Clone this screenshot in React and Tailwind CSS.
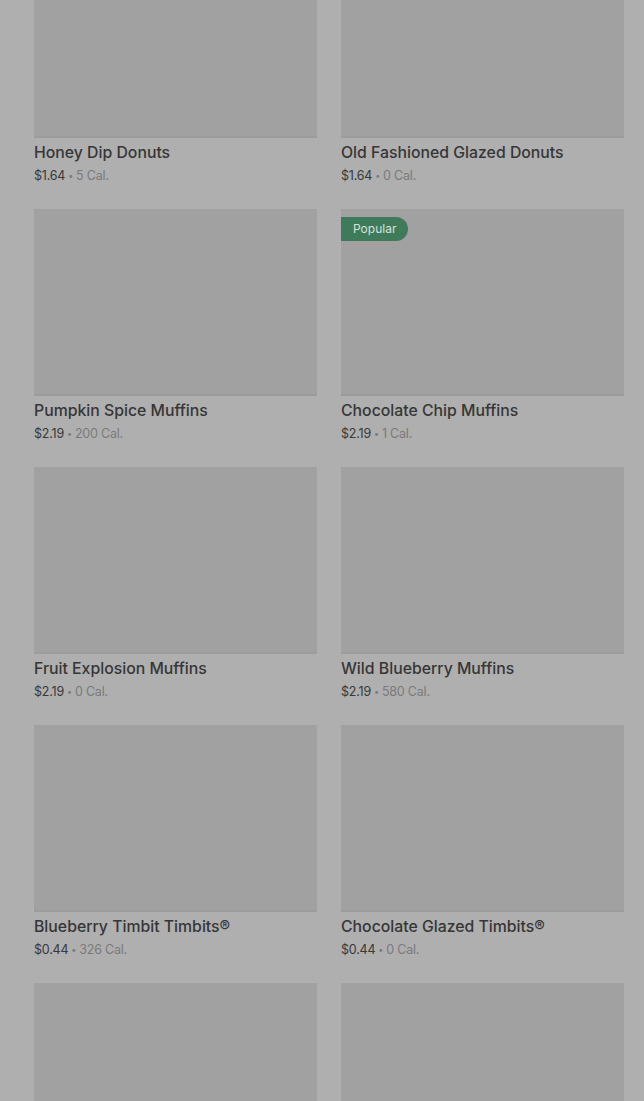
const items = [
  { name: 'Honey Dip Donuts', price: '$1.64', cal: '5 Cal.' },
  { name: 'Old Fashioned Glazed Donuts', price: '$1.64', cal: '0 Cal.' },
  { name: 'Pumpkin Spice Muffins', price: '$2.19', cal: '200 Cal.' },
  { name: 'Chocolate Chip Muffins', price: '$2.19', cal: '1 Cal.', popular: true },
  { name: 'Fruit Explosion Muffins', price: '$2.19', cal: '0 Cal.' },
  { name: 'Wild Blueberry Muffins', price: '$2.19', cal: '580 Cal.' },
  { name: 'Blueberry Timbit Timbits®', price: '$0.44', cal: '326 Cal.' },
  { name: 'Chocolate Glazed Timbits®', price: '$0.44', cal: '0 Cal.' },
  { name: '', price: '', cal: '' },
  { name: '', price: '', cal: '' },
]

const ProductCard = ({ item }) => (
  <div className="flex flex-col">
    <div className="relative h-[187px] bg-[#a1a1a1] border-b-2 border-[#9c9c9c]">
      {item.popular && (
        <span className="absolute left-0 top-[8px] h-[24px] px-[12px] flex items-center rounded-r-full bg-[#3f7a5b] text-[12px] text-[#d6e2da]">
          Popular
        </span>
      )}
    </div>
    {item.name && (
      <>
        <h3 className="mt-[5px] text-[15.8px] leading-[20px] font-medium text-[#363636]">
          {item.name}
        </h3>
        <p className="mt-[4px] text-[12.5px] leading-[18px] tracking-[-0.2px]">
          <span className="text-[#383838]">{item.price}</span>
          <span className="text-[#7a7a7a]">
            <span className="text-[9px] mx-[3px] align-[1px]">•</span>
            {item.cal}
          </span>
        </p>
      </>
    )}
  </div>
)

export default function App() {
  return (
    <div
      className="h-[1101px] overflow-hidden bg-[#afafaf]"
      style={{ fontFamily: 'Inter, "Noto Sans", sans-serif' }}
    >
      <div className="-mt-[49px] pl-[34px] pr-[20px] grid grid-cols-2 gap-x-[24px] gap-y-[24px]">
        {items.map((item, i) => (
          <ProductCard key={i} item={item} />
        ))}
      </div>
    </div>
  )
}
